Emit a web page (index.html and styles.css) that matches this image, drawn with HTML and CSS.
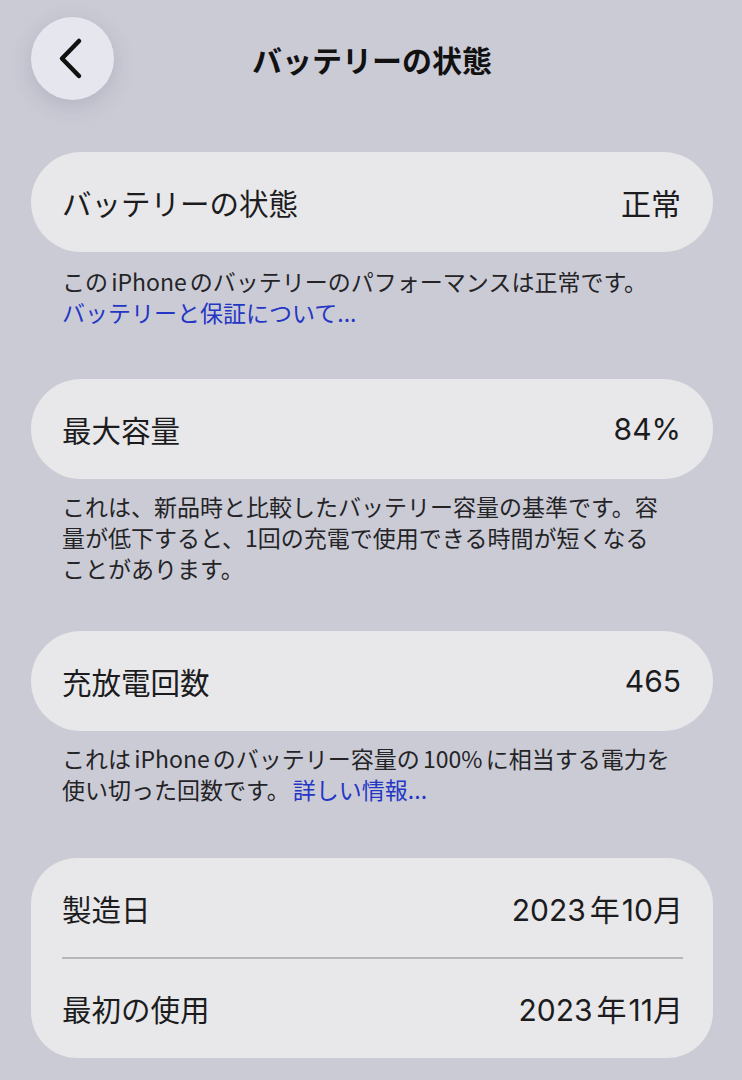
FILE: index.html
```html
<!DOCTYPE html>
<html lang="ja">
<head>
<meta charset="utf-8">
<title>バッテリーの状態</title>
<link rel="stylesheet" href="styles.css">
</head>
<body>
<div class="page">
  <header class="header">
    <button class="back" aria-label="戻る">
      <svg width="83" height="83" viewBox="0 0 83 83"><path d="M48 24 L31 41.5 L48 59" fill="none" stroke="#111" stroke-width="4.5" stroke-linecap="round" stroke-linejoin="round"/></svg>
    </button>
    <h1 class="title">バッテリーの状態</h1>
    <div></div>
  </header>

  <section class="card">
    <div class="row"><span>バッテリーの状態</span><span class="value">正常</span></div>
  </section>
  <p class="note note-first">この iPhone のバッテリーのパフォーマンスは正常です。<br><span class="link">バッテリーと保証について...</span></p>

  <section class="card">
    <div class="row"><span>最大容量</span><span class="value">84%</span></div>
  </section>
  <p class="note note-tight">これは、新品時と比較したバッテリー容量の基準です。容<br>量が低下すると、1回の充電で使用できる時間が短くなる<br>ことがあります。</p>

  <section class="card">
    <div class="row"><span>充放電回数</span><span class="value">465</span></div>
  </section>
  <p class="note">これは iPhone のバッテリー容量の 100% に相当する電力を<br>使い切った回数です。 <span class="link">詳しい情報...</span></p>

  <section class="card card-group">
    <div class="row"><span>製造日</span><span class="value">2023<span class="unit">年</span>10月</span></div>
    <div class="divider"></div>
    <div class="row"><span>最初の使用</span><span class="value">2023<span class="unit">年</span>11月</span></div>
  </section>
</div>
</body>
</html>
```

FILE: styles.css
```css
* { box-sizing: border-box; }
html, body {
  margin: 0;
  padding: 0;
  background: #cbcbd6;
}
body {
  font-family: "Noto Sans CJK JP", "Noto Sans", sans-serif;
  color: #1c1c1e;
  width: 742px;
  height: 1080px;
  overflow: hidden;
}
.page {
  padding: 17px 29px 0 31px;
}
.header {
  display: grid;
  grid-template-columns: 83px 1fr 83px;
  align-items: center;
  height: 83px;
  margin-bottom: 52px;
}
.back {
  width: 83px;
  height: 83px;
  border-radius: 50%;
  border: none;
  padding: 0;
  background: #e6e6ee;
  box-shadow: 0 6px 22px rgba(60, 60, 90, 0.16);
  display: flex;
}
.title {
  margin: 0;
  text-align: center;
  font-size: 30px;
  font-weight: 700;
  line-height: 1;
  color: #111;
}
.card {
  background: #e8e8ea;
  border-radius: 50px;
  padding: 0 32px 0 31px;
}
.card-group {
  border-radius: 46px;
  padding: 0 30px 0 31px;
}
.row {
  height: 100px;
  display: flex;
  align-items: center;
  justify-content: space-between;
  font-size: 29.5px;
  color: #1c1c1e;
}
.value {
  font-family: "Inter", "Noto Sans CJK JP", sans-serif;
  font-size: 30px;
}
.unit {
  font-family: "Noto Sans CJK JP", sans-serif;
  margin: 0 2px 0 4px;
}
.card-group .row { height: 99px; }
.divider {
  height: 1.5px;
  background: #b6b6ba;
}
.note {
  margin: 12px 0 53px;
  padding: 0 31px;
  font-size: 23px;
  line-height: 31px;
  color: #242426;
  word-spacing: -2px;
}
.note-first {
  margin: 14px 0 51px;
}
.note-tight {
  margin-bottom: 47px;
}
.link {
  color: #2436c4;
}
```
